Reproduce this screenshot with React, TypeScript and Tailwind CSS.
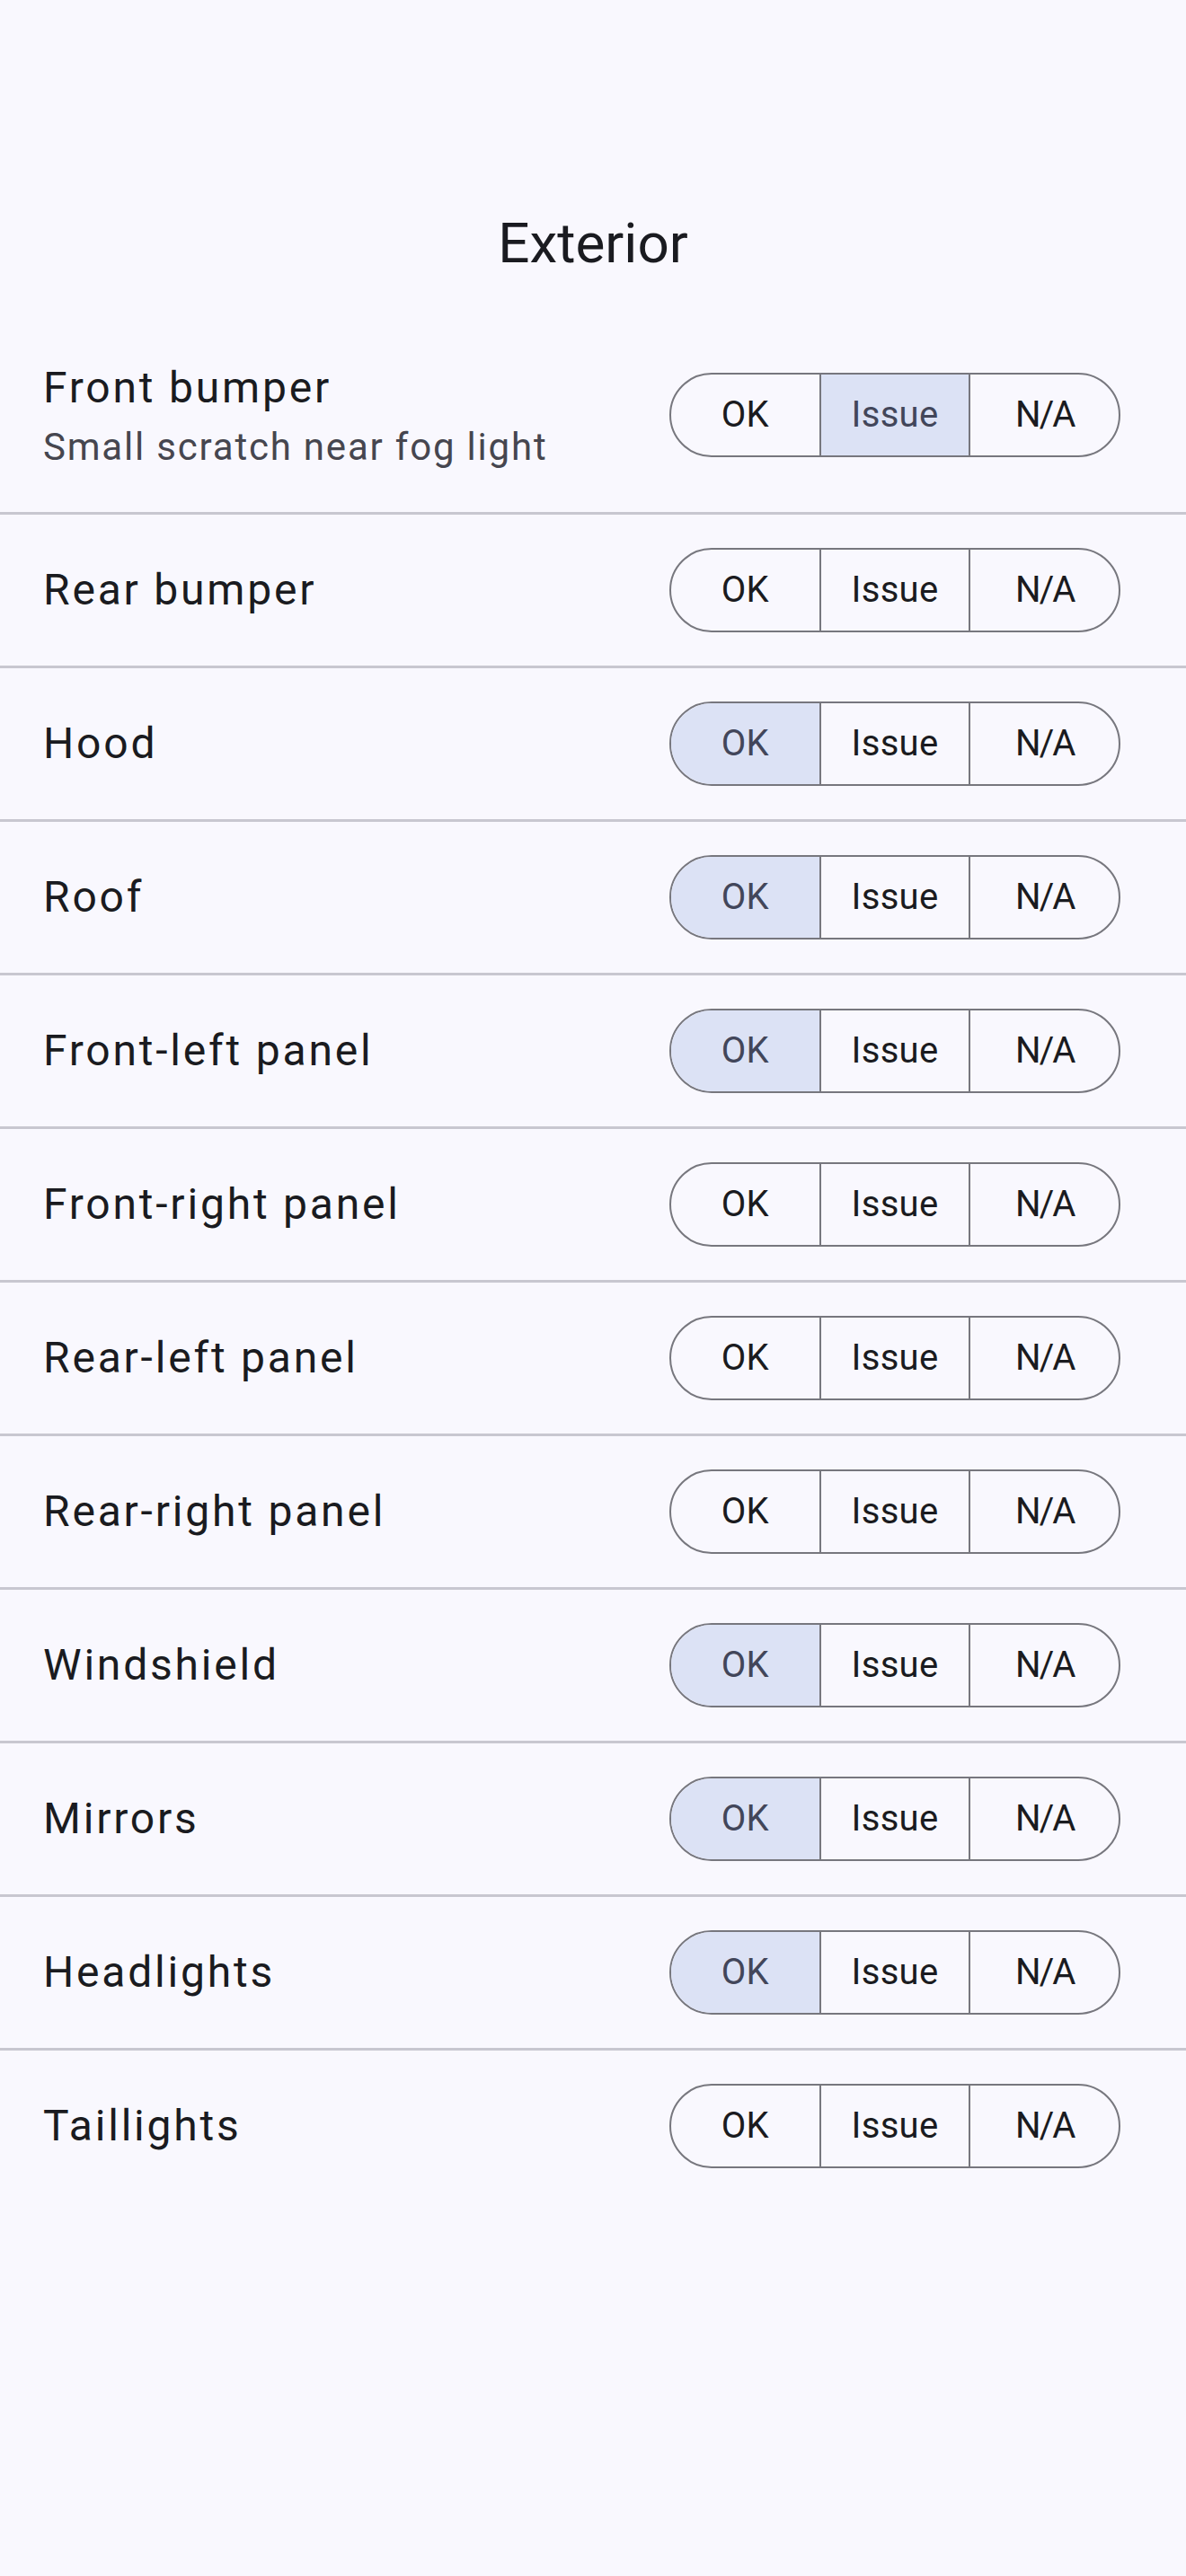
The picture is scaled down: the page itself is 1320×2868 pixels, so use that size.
import { Fragment } from 'react';

type Status = 'ok' | 'issue' | 'na' | null;

interface Part {
  name: string;
  note?: string;
  status: Status;
}

const parts: Part[] = [
  { name: 'Front bumper', note: 'Small scratch near fog light', status: 'issue' },
  { name: 'Rear bumper', status: null },
  { name: 'Hood', status: 'ok' },
  { name: 'Roof', status: 'ok' },
  { name: 'Front-left panel', status: 'ok' },
  { name: 'Front-right panel', status: null },
  { name: 'Rear-left panel', status: null },
  { name: 'Rear-right panel', status: null },
  { name: 'Windshield', status: 'ok' },
  { name: 'Mirrors', status: 'ok' },
  { name: 'Headlights', status: 'ok' },
  { name: 'Taillights', status: null },
];

const options: { key: Status; label: string }[] = [
  { key: 'ok', label: 'OK' },
  { key: 'issue', label: 'Issue' },
  { key: 'na', label: 'N/A' },
];

// Three-way segmented button (OK / Issue / N/A)
const StatusToggle = ({ value }: { value: Status }) => {
  return (
    <div className="flex h-[94px] w-[502px] shrink-0 overflow-hidden rounded-full border-2 border-[#77777e]">
      {options.map((opt, i) => {
        const selected = opt.key === value;
        return (
          <button
            key={opt.label}
            className={`flex flex-1 items-center justify-center text-[40px] ${
              opt.key === 'na' ? 'tracking-[-2px]' : 'tracking-[0.3px]'
            } ${i > 0 ? 'border-l-2 border-[#77777e]' : ''} ${
              selected ? 'bg-[#dce2f5] text-[#42465a]' : 'text-[#1a1b20]'
            }`}
          >
            {opt.label}
          </button>
        );
      })}
    </div>
  );
};

export default function App() {
  return (
    <div
      className="min-h-screen w-full bg-[#f9f8fe] text-[#1a1b20]"
      style={{ fontFamily: 'Roboto, "Noto Sans", sans-serif' }}
    >
      {/* Title */}
      <div className="pt-[227px] pb-[39px] text-center text-[62px] leading-[88px]">Exterior</div>

      {/* Checklist */}
      <ul>
        {parts.map((part, idx) => (
          <Fragment key={part.name}>
            {idx > 0 && <li className="h-[3px] bg-[#c8c7d0]" aria-hidden />}
            <li
              className={`flex items-center justify-between pl-[48px] pr-[73px] ${
                part.note ? 'h-[216px]' : 'h-[168px]'
              }`}
            >
              <div className="flex flex-col">
                <span className="text-[48px] leading-[72px] tracking-[2.8px]">{part.name}</span>
                {part.note && (
                  <span className="text-[42px] leading-[60px] tracking-[1.8px] text-[#46464f]">
                    {part.note}
                  </span>
                )}
              </div>
              <StatusToggle value={part.status} />
            </li>
          </Fragment>
        ))}
      </ul>
    </div>
  );
}
